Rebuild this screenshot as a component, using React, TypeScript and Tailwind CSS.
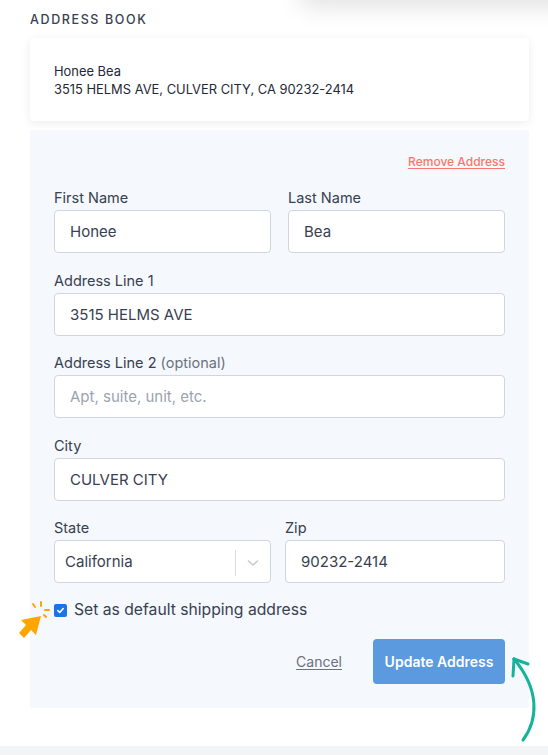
import React from "react";

function Field({ label, optional, value, placeholder }: { label: string; optional?: boolean; value?: string; placeholder?: string }) {
  return (
    <div className="flex flex-col">
      <label className="text-[14.5px] leading-[20px] text-[#374151] mb-[2px]">
        {label}
        {optional && <span className="text-[#6b7280]"> (optional)</span>}
      </label>
      <div className="h-[43px] rounded-[4px] border border-[#cfd6e2] bg-white flex items-center px-[15px] pt-[2px] text-[15px]">
        {value ? (
          <span className="text-[#374151]">{value}</span>
        ) : (
          <span className="text-[#9ca3af]">{placeholder}</span>
        )}
      </div>
    </div>
  );
}

export default function App() {
  return (
    <div
      className="relative w-[548px] h-[755px] bg-white overflow-hidden"
      style={{ fontFamily: "Inter, 'Noto Sans', Arial, sans-serif" }}
    >
      {/* shadowed element above the viewport */}
      <div className="absolute left-[300px] top-[-60px] w-[280px] h-[60px] bg-white rounded-[8px] shadow-[0_6px_24px_rgba(0,0,0,0.12)]" />

      <div className="ml-[30px] w-[499px] pt-[13px]">
        <div className="text-[12.5px] leading-[14px] tracking-[0.13em] text-[#374151] font-medium">ADDRESS BOOK</div>

        <div className="mt-[11px] h-[83px] rounded-[4px] bg-white shadow-[0_2px_10px_rgba(0,0,0,0.08)] px-[24px] flex flex-col justify-center pt-[2px] text-[12.9px] leading-[18px] text-[#1f2937]">
          <div>Honee Bea</div>
          <div>3515 HELMS AVE, CULVER CITY, CA 90232-2414</div>
        </div>

        <div className="mt-[9px] bg-[#f5f8fc] px-[24px] pt-[24px] pb-[24px]">
          <div className="flex justify-end">
            <span className="text-[12px] leading-[16px] font-medium text-[#f8776a] underline underline-offset-2">Remove Address</span>
          </div>

          <div className="mt-[18px] flex flex-col gap-[17.5px]">
            <div className="grid grid-cols-2 gap-[17px]">
              <Field label="First Name" value="Honee" />
              <Field label="Last Name" value="Bea" />
            </div>
            <Field label="Address Line 1" value="3515 HELMS AVE" />
            <Field label="Address Line 2" optional placeholder="Apt, suite, unit, etc." />
            <Field label="City" value="CULVER CITY" />
            <div className="grid grid-cols-[217px_1fr] gap-[14px]">
              <div className="flex flex-col">
                <label className="text-[14.5px] leading-[20px] text-[#374151] mb-[2px]">State</label>
                <div className="h-[43px] rounded-[4px] border border-[#cfd6e2] bg-white flex items-center pl-[10px] pt-[2px] text-[15px] text-[#374151]">
                  <span className="flex-1">California</span>
                  <div className="w-px h-[26px] bg-[#d9dde3]" />
                  <div className="w-[34px] flex justify-center">
                    <svg width="12" height="8" viewBox="0 0 12 8" fill="none" stroke="#c5cad1" strokeWidth="1.6" strokeLinecap="round" strokeLinejoin="round">
                      <path d="M1.5 2 L6 6 L10.5 2" />
                    </svg>
                  </div>
                </div>
              </div>
              <Field label="Zip" value="90232-2414" />
            </div>
          </div>

          <div className="mt-[17px] flex items-center gap-[7px]">
            <div className="w-[13px] h-[13px] rounded-[2px] bg-[#1a73e8] flex items-center justify-center">
              <svg width="9" height="9" viewBox="0 0 12 12" fill="none" stroke="white" strokeWidth="2.2" strokeLinecap="round" strokeLinejoin="round">
                <path d="M2.5 6.2 L5 8.6 L9.6 3.4" />
              </svg>
            </div>
            <span className="text-[15.7px] leading-[20px] text-[#374151]">Set as default shipping address</span>
          </div>

          <div className="mt-[19px] flex items-center justify-end gap-[31px]">
            <span className="text-[14px] text-[#6b7280] underline underline-offset-2">Cancel</span>
            <button className="w-[132px] h-[45px] rounded-[4px] bg-[#5b9ade] text-white text-[14px] font-semibold">Update Address</button>
          </div>
        </div>
      </div>

      {/* bottom strip */}
      <div className="absolute left-0 right-0 bottom-0 h-[9px] bg-[#f3f4f6]" />

      {/* orange cursor with sparkle */}
      <svg className="absolute left-[14px] top-[598px]" width="40" height="42" viewBox="0 0 40 42">
        <g stroke="#ffa500" strokeWidth="2" strokeLinecap="round">
          <line x1="19" y1="6" x2="21" y2="9" />
          <line x1="27" y1="4" x2="27" y2="8" />
          <line x1="31" y1="12" x2="35" y2="12" />
          <line x1="30" y1="17" x2="32" y2="19" />
        </g>
        <path d="M27 18 L7 22 L12 27 L5 35 L10 40 L17 32 L22 37 Z" fill="#ffa500" />
      </svg>

      {/* teal curved arrow */}
      <svg className="absolute left-[500px] top-[650px]" width="48" height="95" viewBox="0 0 48 95">
        <g fill="none" stroke="#14b39a" strokeWidth="3" strokeLinecap="round" strokeLinejoin="round">
          <path d="M23 90 C 38 70, 40 40, 14 9" />
          <path d="M14 9 L 28 14" />
          <path d="M14 9 L 13 26" />
        </g>
      </svg>
    </div>
  );
}
